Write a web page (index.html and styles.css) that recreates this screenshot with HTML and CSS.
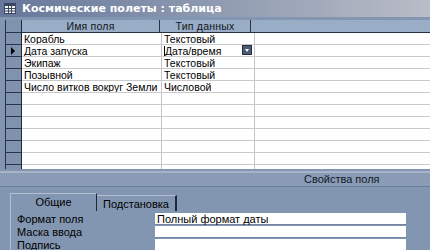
FILE: index.html
```html
<!DOCTYPE html>
<html lang="ru">
<head>
    <meta charset="UTF-8">
    <title>Космические полеты : таблица</title>
    <link rel="stylesheet" href="styles.css">
</head>
<body>
    <div class="window">
        <div class="titlebar">
            <svg class="title-icon" width="12" height="11" viewBox="0 0 12 11">
                <rect x="0.5" y="0.5" width="11" height="10" fill="#f4f4f4" stroke="#3a4560"/>
                <rect x="1" y="1" width="10" height="2" fill="#3a4560"/>
                <path d="M1 5.5H11M1 8H11M4.5 3V10M7.5 3V10" stroke="#3a4560" stroke-width="1"/>
            </svg>
            <span>Космические полеты : таблица</span>
        </div>

        <div class="design">
            <div class="grid">
                <div class="row head">
                    <div class="sel"></div>
                    <div class="cell c1">Имя поля</div>
                    <div class="cell c2">Тип данных</div>
                    <div class="cell c3"></div>
                </div>
                <div class="row">
                    <div class="sel"></div>
                    <div class="cell c1">Корабль</div>
                    <div class="cell c2">Текстовый</div>
                    <div class="cell c3"></div>
                </div>
                <div class="row current">
                    <div class="sel"><span class="arrow"></span></div>
                    <div class="cell c1">Дата запуска</div>
                    <div class="cell c2"><span class="caret"></span>Дата/время<span class="drop"></span></div>
                    <div class="cell c3"></div>
                </div>
                <div class="row">
                    <div class="sel"></div>
                    <div class="cell c1">Экипаж</div>
                    <div class="cell c2">Текстовый</div>
                    <div class="cell c3"></div>
                </div>
                <div class="row">
                    <div class="sel"></div>
                    <div class="cell c1">Позывной</div>
                    <div class="cell c2">Текстовый</div>
                    <div class="cell c3"></div>
                </div>
                <div class="row">
                    <div class="sel"></div>
                    <div class="cell c1">Число витков вокруг Земли</div>
                    <div class="cell c2">Числовой</div>
                    <div class="cell c3"></div>
                </div>
                <div class="row"><div class="sel"></div><div class="cell c1"></div><div class="cell c2"></div><div class="cell c3"></div></div>
                <div class="row"><div class="sel"></div><div class="cell c1"></div><div class="cell c2"></div><div class="cell c3"></div></div>
                <div class="row"><div class="sel"></div><div class="cell c1"></div><div class="cell c2"></div><div class="cell c3"></div></div>
                <div class="row"><div class="sel"></div><div class="cell c1"></div><div class="cell c2"></div><div class="cell c3"></div></div>
                <div class="row"><div class="sel"></div><div class="cell c1"></div><div class="cell c2"></div><div class="cell c3"></div></div>
                <div class="row"><div class="sel"></div><div class="cell c1"></div><div class="cell c2"></div><div class="cell c3"></div></div>
                <div class="row"><div class="sel"></div><div class="cell c1"></div><div class="cell c2"></div><div class="cell c3"></div></div>
            </div>
        </div>

        <div class="props-bar">Свойства поля</div>

        <div class="props">
            <div class="tabs">
                <div class="tab active">Общие</div>
                <div class="tab">Подстановка</div>
            </div>
            <div class="panel">
                <div class="prop">
                    <div class="label">Формат поля</div>
                    <div class="value">Полный формат даты</div>
                </div>
                <div class="prop">
                    <div class="label">Маска ввода</div>
                    <div class="value"></div>
                </div>
                <div class="prop">
                    <div class="label">Подпись</div>
                    <div class="value"></div>
                </div>
            </div>
        </div>
    </div>
</body>
</html>
```

FILE: styles.css
```css
body {
    margin: 0;
    background-color: #8396b1;
    font-family: "Liberation Sans", Arial, sans-serif;
    font-size: 11px;
    color: #000000;
}

.window {
    width: 430px;
    height: 250px;
    overflow: hidden;
    background-color: #8396b1;
}

.titlebar {
    height: 17px;
    display: flex;
    align-items: center;
    gap: 6px;
    padding-left: 4px;
    background: linear-gradient(to right, #67779a, #8a97ae 45%, #b9bdc7);
    color: #ffffff;
    font-family: "DejaVu Sans", Verdana, sans-serif;
    font-weight: bold;
    font-size: 11px;
}

.title-icon {
    flex: none;
}

.design {
    padding: 3px 0 0 5px;
    height: 149px;
    overflow: hidden;
}

.grid {
    display: flex;
    flex-direction: column;
    border-left: 1px solid #2a3346;
}

.row {
    display: flex;
    height: 11px;
    border-bottom: 1px solid #c9c9c9;
    background-color: #ffffff;
}

.sel {
    flex: none;
    width: 15px;
    background-color: #7f92ae;
    border-right: 1px solid #1f2838;
    border-bottom: 1px solid #2a3346;
    margin-bottom: -1px;
    position: relative;
}

.arrow {
    position: absolute;
    left: 5px;
    top: 2px;
    width: 0;
    height: 0;
    border-top: 4px solid transparent;
    border-bottom: 4px solid transparent;
    border-left: 4px solid #000000;
}

.cell {
    font-size: 10.5px;
    line-height: 12px;
    padding-left: 2px;
    white-space: nowrap;
    overflow: hidden;
}

.c1 {
    width: 137px;
    border-right: 1px solid #c4c4c4;
}

.c2 {
    width: 90px;
    position: relative;
}

.c3 {
    flex: 1;
    border-left: 1px solid #c4c4c4;
}

.head {
    height: 12px;
    background-color: #9aadc6;
    border-bottom: 1px solid #26303f;
}

.head .cell {
    text-align: center;
    padding-left: 0;
    color: #111822;
    line-height: 13px;
    letter-spacing: 0.2px;
}

.head .c1,
.head .c3 {
    border-color: #2a3346;
}

.drop {
    position: absolute;
    right: 2px;
    top: 0;
    width: 10px;
    height: 10px;
    background-color: #4b5a75;
    border: 1px solid #26303f;
    box-sizing: border-box;
}

.drop::after {
    content: "";
    position: absolute;
    left: 2px;
    top: 3px;
    border-left: 2px solid transparent;
    border-right: 2px solid transparent;
    border-top: 3px solid #ffffff;
}

.caret {
    display: inline-block;
    width: 1px;
    height: 10px;
    background-color: #000000;
    vertical-align: -1px;
}

.props-bar {
    height: 13px;
    line-height: 13px;
    margin-top: 2px;
    padding-left: 304px;
    background-color: #8a9bb5;
    border-top: 2px solid #a8b5c8;
    border-bottom: 1px solid #6b7d98;
    color: #101826;
}

.props {
    padding: 7px 0 0 10px;
}

.tabs {
    display: flex;
    height: 17px;
    align-items: flex-end;
}

.tab {
    height: 15px;
    line-height: 16px;
    width: 78px;
    text-align: center;
    border-top: 1px solid #b3bfd0;
    border-right: 2px solid #1f2838;
    background-color: #8396b1;
}

.tab.active {
    height: 17px;
    width: 85px;
    border-left: 1px solid #b3bfd0;
    border-right: 1px solid #1f2838;
}

.panel {
    display: flex;
    flex-direction: column;
    padding-top: 2px;
    border-left: 1px solid #b3bfd0;
    padding-left: 6px;
}

.prop {
    display: flex;
    height: 12px;
    margin-bottom: 1px;
}

.label {
    width: 138px;
    line-height: 12px;
}

.value {
    width: 249px;
    background-color: #ffffff;
    border-bottom: 1px solid #7385a0;
    line-height: 12px;
    padding-left: 2px;
}
```
